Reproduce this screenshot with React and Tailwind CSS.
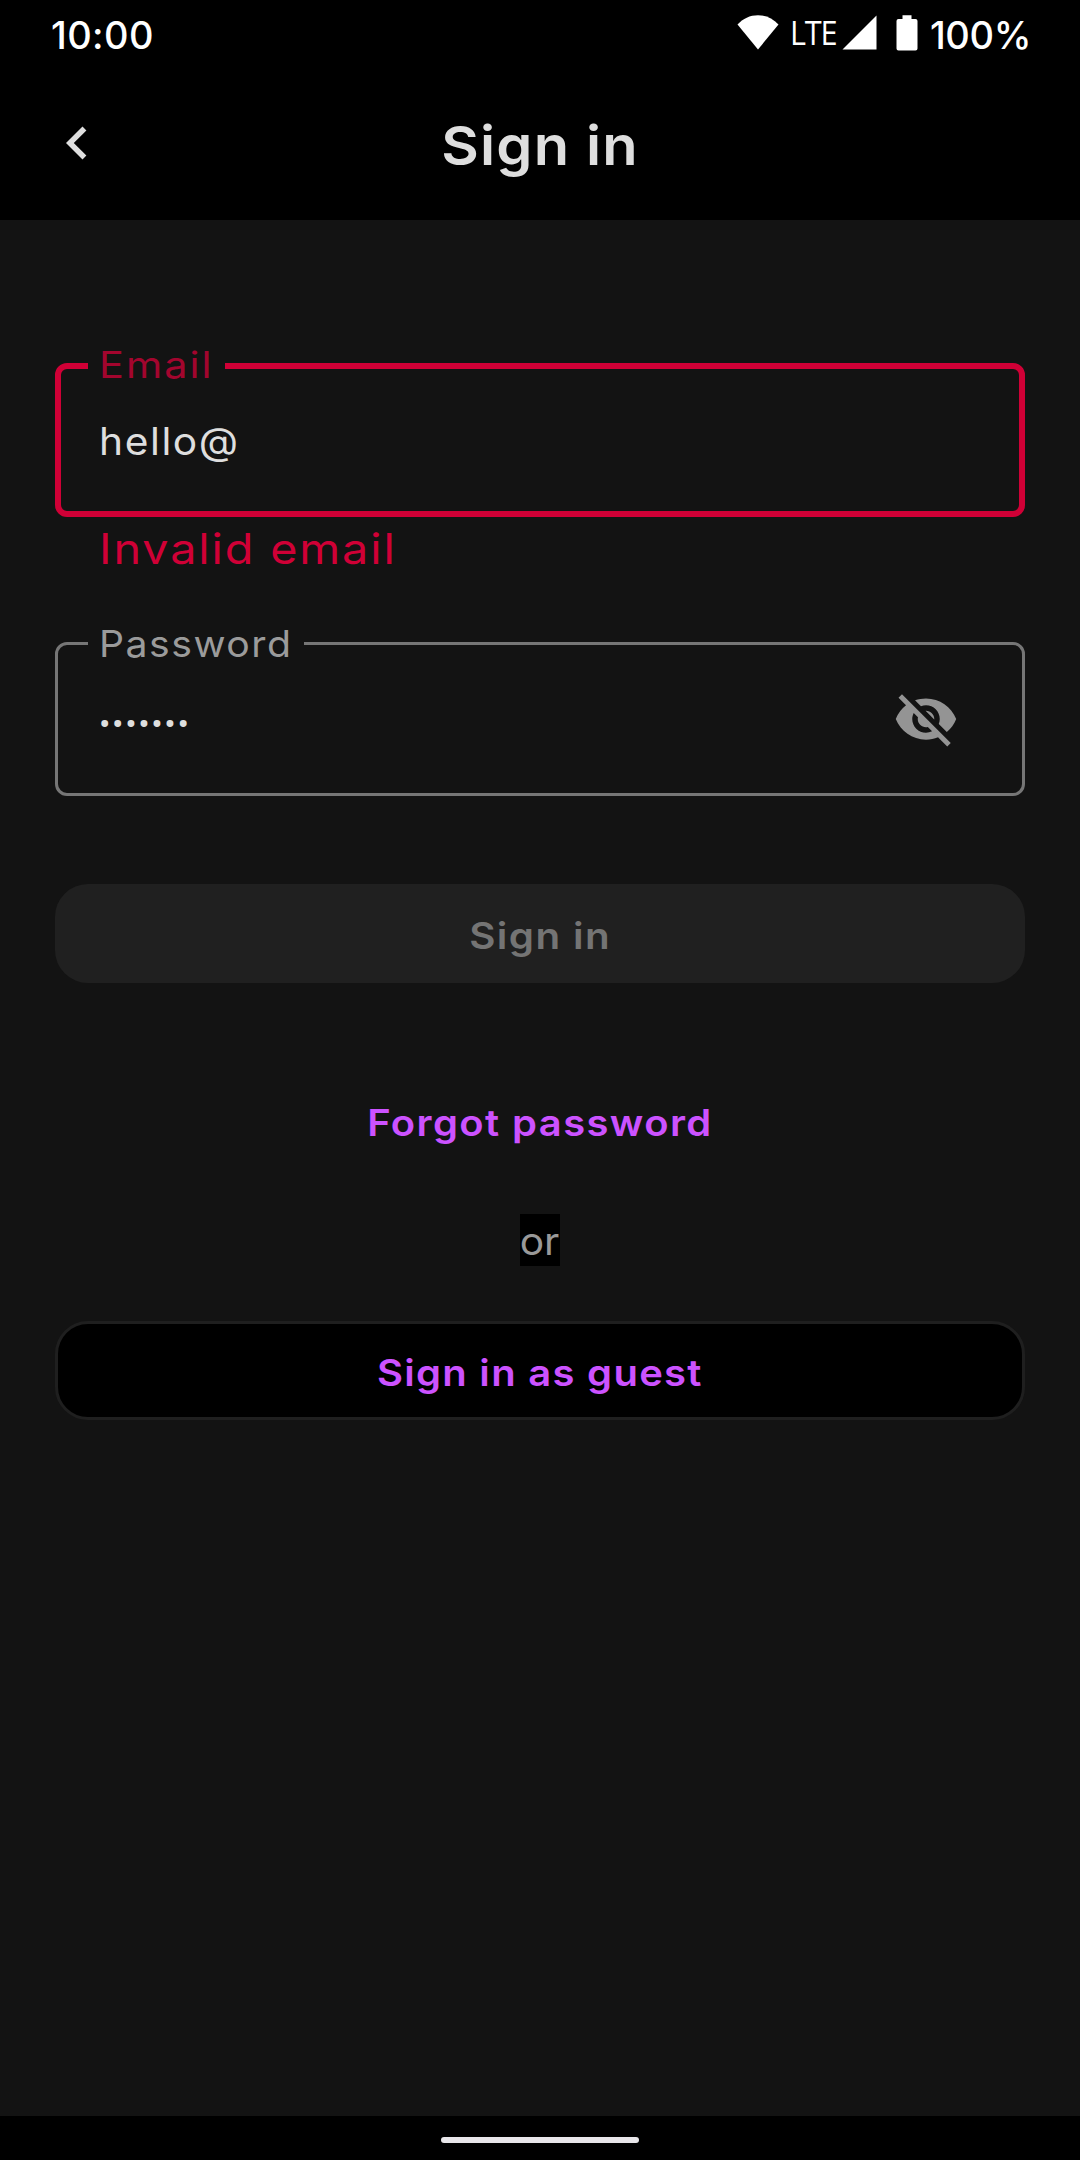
import { MdChevronLeft, MdVisibilityOff } from "react-icons/md";

function StatusBar() {
  return (
    <div className="flex h-[70px] items-start justify-between bg-black pl-[51px] pr-[51px] text-[38px] font-medium leading-[70px] text-white">
      <span className="tracking-[0.4px]">10:00</span>
      <div className="flex h-[70px] items-start">
        <svg className="mt-[15px] h-[35px] w-[42px]" viewBox="0 0 42 35" fill="currentColor">
          <path d="M0.5 9.5C6 3.5 13 0.2 21 0.2S36 3.5 41.500 9.500L21 34.500Z" />
        </svg>
        <span className="ml-[11px] w-[50px] origin-left scale-x-[0.93] whitespace-nowrap font-['Open_Sans',sans-serif] text-[33px] font-normal leading-[65px] tracking-[-1.3px]">
          LTE
        </span>
        <svg className="ml-[2px] mt-[15px] h-[35px] w-[35px]" viewBox="0 0 35 35" fill="currentColor">
          <path d="M0.500 34.500H34.500V0.500Z" />
        </svg>
        <svg className="ml-[19px] mt-[15px] h-[36px] w-[22px]" viewBox="0 0 22 36" fill="currentColor">
          <path d="M6.500 0.200H15.500V4H19.500Q21.500 4 21.500 6V33.500Q21.500 35.500 19.500 35.500H2.500Q0.500 35.500 0.500 33.500V6Q0.500 4 2.500 4H6.500Z" />
        </svg>
        <span className="ml-[12px] w-[99px] whitespace-nowrap tracking-[-0.4px]">100%</span>
      </div>
    </div>
  );
}

function Header() {
  return (
    <header className="grid h-[150px] grid-cols-[150px_1fr_150px] items-center bg-black text-[#dedede]">
      <MdChevronLeft className="mb-[4px] ml-[44px] size-[66px]" />
      <h1 className="scale-x-[1.07] text-center text-[54px] font-semibold tracking-[1.1px]">Sign in</h1>
    </header>
  );
}

export default function App() {
  return (
    <div className="flex h-[2160px] w-[1080px] flex-col overflow-hidden bg-[#131313] font-['Inter','Liberation_Sans',sans-serif]">
      <StatusBar />
      <Header />
      <main className="flex flex-1 flex-col px-[55px] pt-[143px]">
        <div className="relative flex h-[154px] items-center rounded-[12px] border-[6px] border-[#d00036] pl-[38px]">
          <label className="absolute left-[27px] top-[-29px] h-[50px] w-[137px] bg-[#131313] pl-[11px] text-[37px] leading-[50px] text-[#a3052e]">
            <span className="inline-block origin-left scale-x-[1.12] tracking-[1.8px]">Email</span>
          </label>
          <span className="mt-[2px] inline-block origin-left scale-x-[1.07] text-[38px] tracking-[1.5px] text-[#dedede]">
            hello@
          </span>
        </div>
        <p className="mt-[7px] h-[49px] w-[290px] origin-left scale-x-[1.1] whitespace-nowrap pl-[40px] text-[42.5px] leading-[50px] tracking-[1.7px] text-[#d00036]">
          Invalid email
        </p>

        <div className="relative mt-[69px] flex h-[154px] items-center justify-between rounded-[12px] border-[3px] border-[#767676] pl-[41px] pr-[63px]">
          <label className="absolute left-[30px] top-[-26px] h-[50px] w-[216px] bg-[#131313] pl-[11px] text-[37px] leading-[50px] text-[#9b9b9b]">
            <span className="inline-block origin-left scale-x-[1.06] tracking-[1.4px]">Password</span>
          </label>
          <span className="mt-[10px] font-['Roboto',sans-serif] text-[34px] tracking-[1.6px] text-[#dedede]">•••••••</span>
          <MdVisibilityOff className="size-[66px] text-[#949494]" />
        </div>

        <button className="mt-[88px] h-[99px] rounded-[33px] bg-[#202020] pt-[4px] text-[37px] font-semibold text-[#747474]">
          <span className="inline-block scale-x-[1.09] tracking-[1.3px]">Sign in</span>
        </button>

        <a className="mt-[115px] h-[50px] text-center text-[37px] font-semibold leading-[50px] text-[#cc52ff]">
          <span className="inline-block scale-x-[1.08] tracking-[1.3px]">Forgot password</span>
        </a>

        <div className="mt-[66px] flex h-[52px] w-[40px] justify-center self-center bg-black text-[38px] leading-[54px] text-[#999999]">
          <span className="scale-x-[1.07]">or</span>
        </div>

        <button className="mt-[55px] h-[99px] rounded-[33px] border-[3px] border-[#1f1f1f] bg-black pt-[4px] text-[37px] font-semibold text-[#cc52ff]">
          <span className="inline-block scale-x-[1.08] tracking-[1.2px]">Sign in as guest</span>
        </button>
      </main>
      <nav className="flex h-[44px] justify-center bg-black pt-[21px]">
        <div className="h-[6px] w-[198px] rounded-full bg-[#e8e6ea]" />
      </nav>
    </div>
  );
}
